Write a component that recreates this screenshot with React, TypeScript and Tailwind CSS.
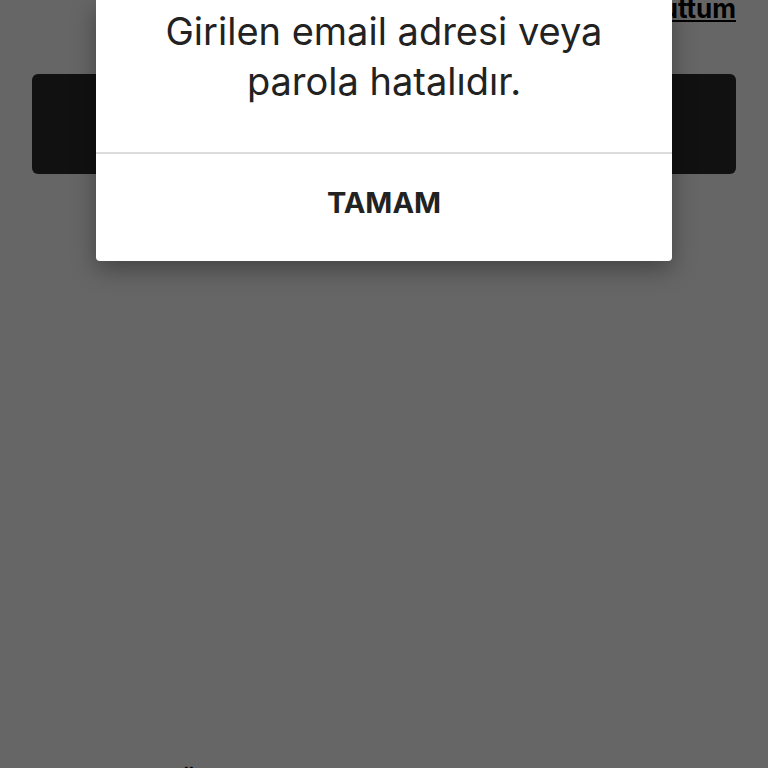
export default function App() {
  return (
    <div className="relative h-[768px] w-[768px] overflow-hidden bg-white font-['Inter',sans-serif]">
      {/* ── Page behind the dialog ── */}
      <div className="flex h-full flex-col px-8">
        <div className="flex h-[22px] items-end justify-end">
          <a className="text-[26px] font-bold leading-none text-black underline underline-offset-2">
            Şifremi Unuttum
          </a>
        </div>
        <button className="mt-[52px] h-[100px] w-full rounded-md bg-[#2b2b2b] text-2xl font-semibold text-white">
          GİRİŞ YAP
        </button>
        <div className="mt-auto pl-[148px]">
          <p className="translate-y-[32px] text-[24px] font-semibold text-black">Üye Ol</p>
        </div>
      </div>

      {/* ── Overlay ── */}
      <div className="absolute inset-0 bg-black/60" />

      {/* ── Alert dialog ── */}
      <div className="absolute left-[96px] top-0 w-[576px] rounded-b-[4px] bg-white shadow-[0_8px_24px_rgba(0,0,0,0.35)]">
        <div className="flex h-[152px] items-start justify-center pt-[6px]">
          <p className="text-center text-[38px] leading-[50px] text-[#222]">
            Girilen email adresi veya
            <br />
            parola hatalıdır.
          </p>
        </div>
        <div className="h-[2px] bg-[#dcdcdc]" />
        <div className="flex h-[107px] items-center justify-center pb-[10px]">
          <span className="text-[29px] font-bold text-[#222]">TAMAM</span>
        </div>
      </div>
    </div>
  );
}
